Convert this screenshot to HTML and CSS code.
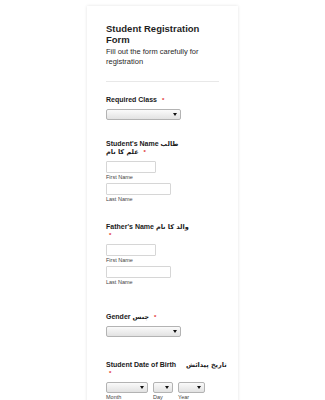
FILE: index.html
```html
<!DOCTYPE html>
<html lang="en">
<head>
    <meta charset="UTF-8">
    <meta name="viewport" content="width=device-width, initial-scale=1.0">
    <title>Student Registration Form</title>
    <link rel="stylesheet" href="styles.css">
</head>
<body>
    <div class="form-card">
        <div class="form-header">
            <h1 class="form-title">Student Registration Form</h1>
            <p class="form-subtitle">Fill out the form carefully for registration</p>
        </div>

        <div class="field">
            <label class="field-label">Required Class <span class="req">*</span></label>
            <div class="select select-wide"></div>
        </div>

        <div class="field">
            <label class="field-label">Student's Name <span class="ur">طالب</span><br><span class="ur">علم کا نام</span> <span class="req">*</span></label>
            <div class="input input-first"></div>
            <span class="sublabel">First Name</span>
            <div class="input input-last"></div>
            <span class="sublabel">Last Name</span>
        </div>

        <div class="field">
            <label class="field-label">Father's Name <span class="ur">والد کا نام</span><br><span class="req">*</span></label>
            <div class="input input-first"></div>
            <span class="sublabel">First Name</span>
            <div class="input input-last"></div>
            <span class="sublabel">Last Name</span>
        </div>

        <div class="field field-gender">
            <label class="field-label">Gender <span class="ur">جنس</span> <span class="req">*</span></label>
            <div class="select select-wide"></div>
        </div>

        <div class="field field-dob">
            <label class="field-label nowrap">Student Date of Birth <span class="ur ur-spaced">تاریخ پیدائش</span><br><span class="req">*</span></label>
            <div class="date-row">
                <div class="date-part">
                    <div class="select select-month"></div>
                    <span class="sublabel">Month</span>
                </div>
                <div class="date-part">
                    <div class="select select-day"></div>
                    <span class="sublabel">Day</span>
                </div>
                <div class="date-part">
                    <div class="select select-year"></div>
                    <span class="sublabel">Year</span>
                </div>
            </div>
        </div>
    </div>
</body>
</html>
```

FILE: styles.css
```css
body {
    margin: 0;
    background-color: #fff;
    font-family: "Liberation Sans", Arial, "DejaVu Sans", sans-serif;
    color: #222;
}
.form-card {
    width: 151px;
    min-height: 420px;
    margin: 6px auto 0;
    padding: 18px 19px 0;
    box-sizing: border-box;
    background: #fff;
    box-shadow: 0 0 3px rgba(0, 0, 0, 0.12);
}
.form-header {
    padding-bottom: 14px;
    border-bottom: 1px solid #e8e8e8;
    margin-bottom: 14px;
}
.form-title {
    margin: 0;
    font-size: 9.5px;
    line-height: 10.5px;
    font-weight: bold;
    color: #1f1f1f;
}
.form-subtitle {
    margin: 2px 0 0;
    font-size: 7.5px;
    line-height: 10px;
    color: #2a2a2a;
}
.field {
    margin-bottom: 20px;
}
.field-gender {
    margin-top: 27px;
}
.field-dob {
    margin-top: 24px;
}
.field-label {
    display: block;
    margin-bottom: 5px;
    font-size: 7px;
    line-height: 8px;
    font-weight: bold;
    color: #1a1a1a;
}
.nowrap {
    white-space: nowrap;
}
.ur {
    font-family: "DejaVu Sans", sans-serif;
    font-size: 6.5px;
}
.ur-spaced {
    margin-left: 8px;
}
.req {
    color: #e02b2b;
    margin-left: 3px;
    font-size: 6px;
}
.select {
    position: relative;
    height: 11px;
    box-sizing: border-box;
    border: 1px solid #b3b3b3;
    border-radius: 2px;
    background: linear-gradient(#fafafa, #e2e2e2);
}
.select::after {
    content: "";
    position: absolute;
    right: 3px;
    top: 3px;
    border-left: 2px solid transparent;
    border-right: 2px solid transparent;
    border-top: 3px solid #111;
}
.select-wide {
    width: 75px;
}
.select-month {
    width: 42px;
}
.select-day {
    width: 20px;
}
.select-year {
    width: 27px;
}
.input {
    height: 12px;
    box-sizing: border-box;
    border: 1px solid #d6d6d6;
    border-radius: 1px;
    background: #fff;
}
.input-first {
    width: 50px;
}
.input-last {
    width: 65px;
    margin-top: 2px;
}
.sublabel {
    display: block;
    margin-top: 1px;
    font-size: 5.5px;
    line-height: 7px;
    color: #444;
}
.date-row {
    display: flex;
    gap: 5px;
}
```
